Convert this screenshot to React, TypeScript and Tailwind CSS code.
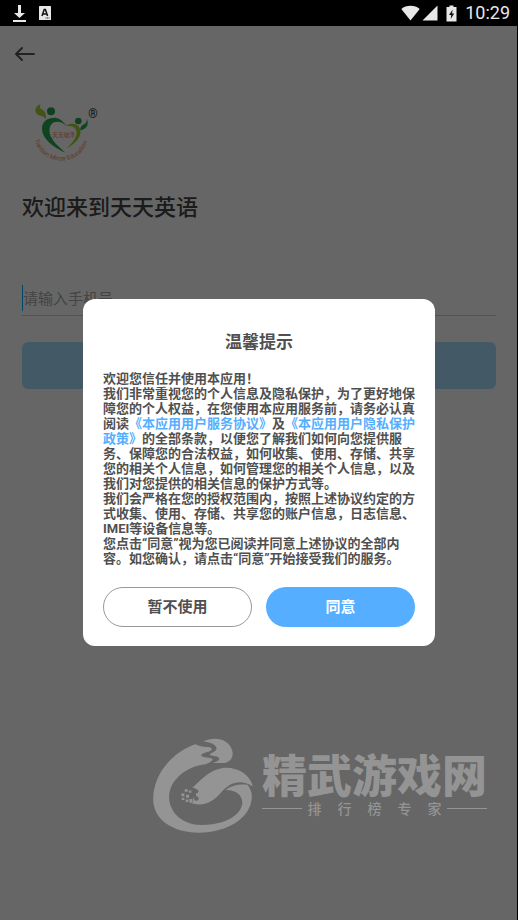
import type { ReactNode } from "react";

const WATERMARK_TAGLINE = ["排", "行", "榜", "专", "家"];

function StatusBar() {
  return (
    <header className="flex h-[26px] items-center justify-between bg-black pl-3 pr-2 text-[#e8e8e8]">
      <div className="flex items-center gap-3">
        <svg viewBox="0 0 15 18" className="h-[18px] w-[15px]" fill="currentColor" aria-hidden="true">
          <path d="M6 1h3v8h4L7.500 14 2 9h4z" />
          <path d="M1 16h13v2H1z" />
        </svg>
        <svg viewBox="0 0 12 14" className="h-[14px] w-3" aria-hidden="true">
          <rect width="12" height="14" rx="0.600" fill="currentColor" />
          <path d="M3 10 5.200 3.500h1.200L8.600 10M3.800 8h4" fill="none" stroke="#111" strokeWidth="1.500" />
          <path d="M6.500 12h4" stroke="#333" strokeDasharray="1 0.500" />
        </svg>
      </div>
      <div className="flex items-center">
        <svg viewBox="0 0 19 16" className="h-4 w-[19px]" fill="currentColor" aria-hidden="true">
          <path d="M0.300 4C5-.2 14-.2 18.700 4L9.500 15.500z" />
        </svg>
        <svg viewBox="0 0 16 16" className="ml-[2px] h-4 w-4" fill="currentColor" aria-hidden="true">
          <path d="M15.500 0.500v15H0.500z" />
        </svg>
        <svg viewBox="0 0 11 17" className="ml-2 h-[17px] w-[11px]" aria-hidden="true">
          <path d="M3.500 0.500h4V2H10.500v14.500H0.500V2h3z" fill="currentColor" />
          <path d="M6.700 4.500 3 10h2.200L4.700 14 8.200 8.500H6z" fill="#111" />
        </svg>
        <span className="ml-2 text-lg leading-[26px]">10:29</span>
      </div>
    </header>
  );
}

function BrandLogo() {
  return (
    <svg viewBox="0 0 300 240" className="h-20 w-[100px]" role="img" aria-label="天天敏泽">
      <path d="M76 42C55 52 56 74 80 78c6 2 9 6 12 10 4-16-3-26-13-30-5-3-5-9-3-16z" fill="#a4cf35" />
      <circle cx="108" cy="64" r="12" fill="#28a050" />
      <path
        d="M151 188C119 173 82 149 81 116c0-23 21-35 43-32 14 3 22 12 31 24-12-12-26-16-38-11-15 7-17 27-9 43 8 17 26 32 43 48z"
        fill="#28a850"
      />
      <path
        d="M153 107c11-8 32-8 39 4 15 23-9 50-36 63 18-17 34-37 27-54-5-11-16-13-30-13z"
        fill="#a4cf35"
      />
      <circle cx="190" cy="93" r="10" fill="#28a050" />
      <path d="M216 86c6 18 0 30-20 35-1-10 4-15 11-18 6-3 9-9 9-17z" fill="#28a850" />
      <text x="112" y="142" fontSize="17" fill="#f09058">
        天天敏泽
      </text>
      <path id="logo-arc" d="M59 148C78 232 202 236 220 142" fill="none" />
      <text fontSize="19" fill="#f09058">
        <textPath href="#logo-arc">Tiantian Minze Education</textPath>
      </text>
      <text x="220" y="84" fontSize="36" fill="#333">
        ®
      </text>
    </svg>
  );
}

function SignInPage() {
  return (
    <div className="flex flex-col pl-[22px] pr-[21px] pt-4">
      <button type="button" aria-label="返回" className="-ml-2 h-6 w-6 text-[#555]">
        <svg viewBox="0 0 24 24" fill="none" stroke="currentColor" strokeWidth="2" strokeLinecap="round" strokeLinejoin="round">
          <path d="M20 12H2M8 6l-6 6 6 6" />
        </svg>
      </button>
      <div className="-ml-[7px] mt-6">
        <BrandLogo />
      </div>
      <h1 className="mt-[22px] text-[22px] font-medium leading-8 text-[#444]">欢迎来到天天英语</h1>
      <form className="mt-[61px] flex flex-col">
        <div className="flex h-[31px] items-start border-b border-[#ccc]">
          <span className="h-[26px] w-px bg-[#00b4ff]" aria-hidden="true" />
          <input
            type="tel"
            aria-label="手机号"
            placeholder="请输入手机号"
            className="h-[28px] w-full bg-transparent text-[15px] outline-none placeholder:text-[#aaa]"
          />
        </div>
        <button type="button" aria-label="下一步" className="mt-[26px] h-[47px] rounded-md bg-[#a8e2ff]" />
      </form>
    </div>
  );
}

function PolicyLink({ children }: { children: ReactNode }) {
  return (
    <a href="#" className="text-[#55aeff]">
      {children}
    </a>
  );
}

function PrivacyDialog() {
  return (
    <section
      role="dialog"
      aria-labelledby="dialog-title"
      className="w-full rounded-xl bg-white pb-[19px] pt-[31px] text-[#505050]"
    >
      <h2 id="dialog-title" className="text-center text-[17px] font-bold leading-6">
        温馨提示
      </h2>
      <div className="mt-[17px] pl-5 pr-4 text-[13px] font-bold leading-[15px]">
        <p>欢迎您信任并使用本应用！</p>
        <p>
          我们非常重视您的个人信息及隐私保护，为了更好地保障您的个人权益，在您使用本应用服务前，请务必认真阅读
          <PolicyLink>《本应用用户服务协议》</PolicyLink>及<PolicyLink>《本应用用户隐私保护政策》</PolicyLink>
          的全部条款，以便您了解我们如何向您提供服务、保障您的合法权益，如何收集、使用、存储、共享您的相关个人信息，如何管理您的相关个人信息，以及我们对您提供的相关信息的保护方式等。
        </p>
        <p>
          我们会严格在您的授权范围内，按照上述协议约定的方式收集、使用、存储、共享您的账户信息，日志信息、IMEI等设备信息等。
        </p>
        <p>您点击“同意”视为您已阅读并同意上述协议的全部内容。如您确认，请点击“同意”开始接受我们的服务。</p>
      </div>
      <div className="mt-[21px] grid grid-cols-2 gap-[14px] px-5 text-[15px] font-bold">
        <button type="button" className="h-10 rounded-full border border-[#999] pt-[2px]">
          暂不使用
        </button>
        <button type="button" className="h-10 rounded-full bg-[#55aeff] pt-[2px] text-white">
          同意
        </button>
      </div>
    </section>
  );
}

function Watermark() {
  return (
    <div className="pointer-events-none absolute bottom-[86px] right-[30px] flex items-center gap-2 text-[#949494]">
      <svg viewBox="30 20 306 292" className="h-[97px] w-[102px]" fill="currentColor" aria-hidden="true">
        <path d="M160 42C90 66 33 132 33 207c0 62 58 101 137 101 86 0 156-43 160-105 1-15-5-29-13-39-21-4-50 1-67 16 31-2 54 16 51 42-5 36-58 64-122 63-59-1-99-38-98-87 2-52 57-91 109-96C202 98 212 92 212 87c-2-6-22-3-34-10-4-11 30-10 32-21-6-9-20-4-34-8z" />
        <path d="M184 33c34-16 80-8 88 32 2 17-7 30-24 33l-36 0c10-2 20-6 20-13-4-11-22-5-28-11 0-8 20-8 20-20-3-13-20-17-40-21z" />
        <path d="M150 173c22-18 50-54 92-60 46-4 83 21 91 56-38-24-69-11-93 15-20 24-43 41-73 39-11-1-20-4-28-8z" />
        <g fill="#666">
          <circle cx="154" cy="181" r="8" />
          <circle cx="163" cy="183" r="6" />
          <circle cx="163" cy="205" r="7" />
          <circle cx="148" cy="195" r="10" />
          <path d="M138 172h15v45h-15z" />
          <path d="M148 188h14v14h-14z" />
        </g>
        <path d="M128 177h9v8h-9zM118 190h9v8h-9zM132 194h9v9h-9zM119 203h8v7h-8zM131 208h8v8h-8zM142 207h9v10h-9zM141 181h7v7h-7z" />
      </svg>
      <div className="flex flex-col">
        <span className="text-[45px] font-black leading-[46px]">精武游戏网</span>
        <div className="flex items-center justify-between text-sm font-medium leading-4">
          <span className="h-px w-10 bg-current" />
          <span className="flex gap-4">
            {WATERMARK_TAGLINE.map((char) => (
              <span key={char}>{char}</span>
            ))}
          </span>
          <span className="h-px w-10 bg-current" />
        </div>
      </div>
    </div>
  );
}

export default function App() {
  return (
    <div
      lang="zh-CN"
      className="flex min-h-screen flex-col font-['Roboto','Noto_Sans_CJK_SC',sans-serif]"
    >
      <StatusBar />
      <main className="relative flex-1 border-r border-black bg-white">
        <SignInPage />
        <div className="absolute inset-0 flex items-center bg-black/60 pb-[2px] pl-[83px] pr-[82px]">
          <PrivacyDialog />
          <Watermark />
        </div>
      </main>
    </div>
  );
}
